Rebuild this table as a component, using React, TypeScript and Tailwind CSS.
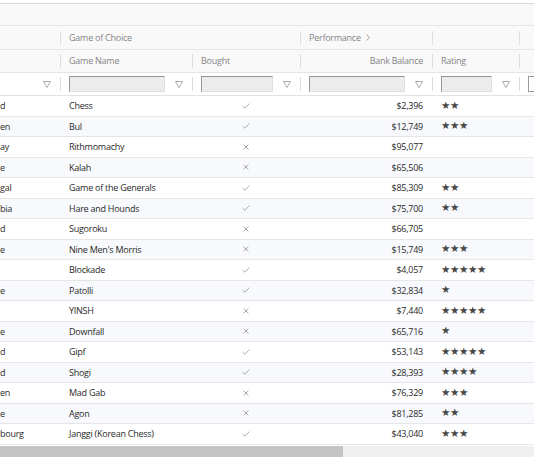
import React from "react";

type Row = { c: string; g: string; b: boolean; bal: string; r: number };

const rows: Row[] = [
  { c: "d", g: "Chess", b: true, bal: "$2,396", r: 2 },
  { c: "en", g: "Bul", b: true, bal: "$12,749", r: 3 },
  { c: "ay", g: "Rithmomachy", b: false, bal: "$95,077", r: 0 },
  { c: "e", g: "Kalah", b: false, bal: "$65,506", r: 0 },
  { c: "gal", g: "Game of the Generals", b: true, bal: "$85,309", r: 2 },
  { c: "bia", g: "Hare and Hounds", b: true, bal: "$75,700", r: 2 },
  { c: "d", g: "Sugoroku", b: false, bal: "$66,705", r: 0 },
  { c: "e", g: "Nine Men's Morris", b: false, bal: "$15,749", r: 3 },
  { c: "", g: "Blockade", b: true, bal: "$4,057", r: 5 },
  { c: "e", g: "Patolli", b: true, bal: "$32,834", r: 1 },
  { c: "", g: "YINSH", b: false, bal: "$7,440", r: 5 },
  { c: "e", g: "Downfall", b: false, bal: "$65,716", r: 1 },
  { c: "d", g: "Gipf", b: true, bal: "$53,143", r: 5 },
  { c: "d", g: "Shogi", b: true, bal: "$28,393", r: 4 },
  { c: "en", g: "Mad Gab", b: false, bal: "$76,329", r: 3 },
  { c: "e", g: "Agon", b: false, bal: "$81,285", r: 2 },
  { c: "bourg", g: "Janggi (Korean Chess)", b: true, bal: "$43,040", r: 3 },
];

const cols = "grid grid-cols-[60px_132px_108px_132px_87px_1fr]";

function Sep() {
  return <span className="w-px h-[14px] bg-[#dedede] shrink-0" />;
}

function FilterIcon() {
  return (
    <svg width="8" height="7" viewBox="0 0 8 7" className="shrink-0">
      <path d="M0.5 0.5 H7.5 L4 6.5 Z" fill="none" stroke="#a0a0a0" strokeWidth="0.9" />
    </svg>
  );
}

function FilterInput() {
  return (
    <div className="flex-1 h-[16px] bg-[#ececec] border-t border-l border-[#969696] border-r border-b border-r-[#e0e0e0] border-b-[#e0e0e0]" />
  );
}

function FilterCell({ first }: { first?: boolean }) {
  return (
    <div className="flex items-center h-full">
      {!first && <Sep />}
      {first ? <div className="flex-1" /> : <div className="flex-1 ml-[8px] flex"><FilterInput /></div>}
      <div className="w-[27px] flex justify-center shrink-0">
        <FilterIcon />
      </div>
    </div>
  );
}

function Check() {
  return (
    <svg width="8" height="6" viewBox="0 0 8 6">
      <path d="M0.6 3.2 L2.8 5.2 L7.4 0.6" fill="none" stroke="#aaaaaa" strokeWidth="1" />
    </svg>
  );
}

function Cross() {
  return (
    <svg width="6" height="6" viewBox="0 0 6 6">
      <path d="M0.6 0.6 L5.4 5.4 M5.4 0.6 L0.6 5.4" fill="none" stroke="#a8a8a8" strokeWidth="1" />
    </svg>
  );
}

export default function App() {
  return (
    <div className="w-[534px] h-[462px] bg-white overflow-hidden font-['Open_Sans',sans-serif] text-[9px] tracking-[-0.25px] text-[#2a2a2a]">
      <div className="h-[3px]" />
      <div className="border-t border-[#dadada] bg-[#f9f9f9] text-[#858585]">
        <div className="h-[22px] border-b border-[#e4e4e4]" />
        <div className={`${cols} h-[24px] border-b border-[#e4e4e4]`}>
          <div />
          <div className="col-span-2 flex items-center">
            <Sep />
            <span className="pl-[8px]">Game of Choice</span>
          </div>
          <div className="flex items-center">
            <Sep />
            <span className="pl-[8px] flex items-center gap-[5px]">
              Performance
              <svg width="4" height="7" viewBox="0 0 4 7">
                <path d="M0.5 0.5 L3.5 3.5 L0.5 6.5" fill="none" stroke="#999" strokeWidth="0.9" />
              </svg>
            </span>
          </div>
          <div className="flex items-center">
            <Sep />
          </div>
          <div className="flex items-center">
            <Sep />
          </div>
        </div>
        <div className={`${cols} h-[23px] border-b border-[#e4e4e4]`}>
          <div />
          <div className="flex items-center">
            <Sep />
            <span className="pl-[8px]">Game Name</span>
          </div>
          <div className="flex items-center">
            <Sep />
            <span className="pl-[8px]">Bought</span>
          </div>
          <div className="flex items-center">
            <Sep />
            <span className="flex-1 text-right pr-[9px]">Bank Balance</span>
          </div>
          <div className="flex items-center">
            <Sep />
            <span className="pl-[8px]">Rating</span>
          </div>
          <div className="flex items-center">
            <Sep />
          </div>
        </div>
        <div className={`${cols} h-[23px] border-b border-[#e2e2e2] bg-white`}>
          <FilterCell first />
          <FilterCell />
          <FilterCell />
          <FilterCell />
          <FilterCell />
          <div className="flex items-center h-full">
            <Sep />
            <div className="ml-[8px] w-[20px] h-[16px] bg-white border border-[#9a9a9a]" />
          </div>
        </div>
      </div>
      <div>
        {rows.map((row, i) => (
          <div
            key={i}
            className={`${cols} h-[20.5px] border-b border-[#e6e6e6] ${i % 2 === 1 ? "bg-[#f7f9fc]" : "bg-white"}`}
          >
            <div className="flex items-center overflow-hidden whitespace-nowrap">
              <span>{row.c}</span>
            </div>
            <div className="flex items-center pl-[9px] whitespace-nowrap">{row.g}</div>
            <div className="flex items-center justify-center">{row.b ? <Check /> : <Cross />}</div>
            <div className="flex items-center justify-end pr-[9px]">{row.bal}</div>
            <div className="flex items-center pl-[9px] font-['DejaVu_Sans',sans-serif] text-[10.5px] text-[#484848] tracking-[-0.4px]">
              {"★".repeat(row.r)}
            </div>
            <div />
          </div>
        ))}
      </div>
      <div className="h-[1.5px]" />
      <div className="flex h-[11px]">
        <div className="w-[343px] bg-[#c4c4c4]" />
        <div className="flex-1 bg-[#f0f0f0]" />
      </div>
    </div>
  );
}
